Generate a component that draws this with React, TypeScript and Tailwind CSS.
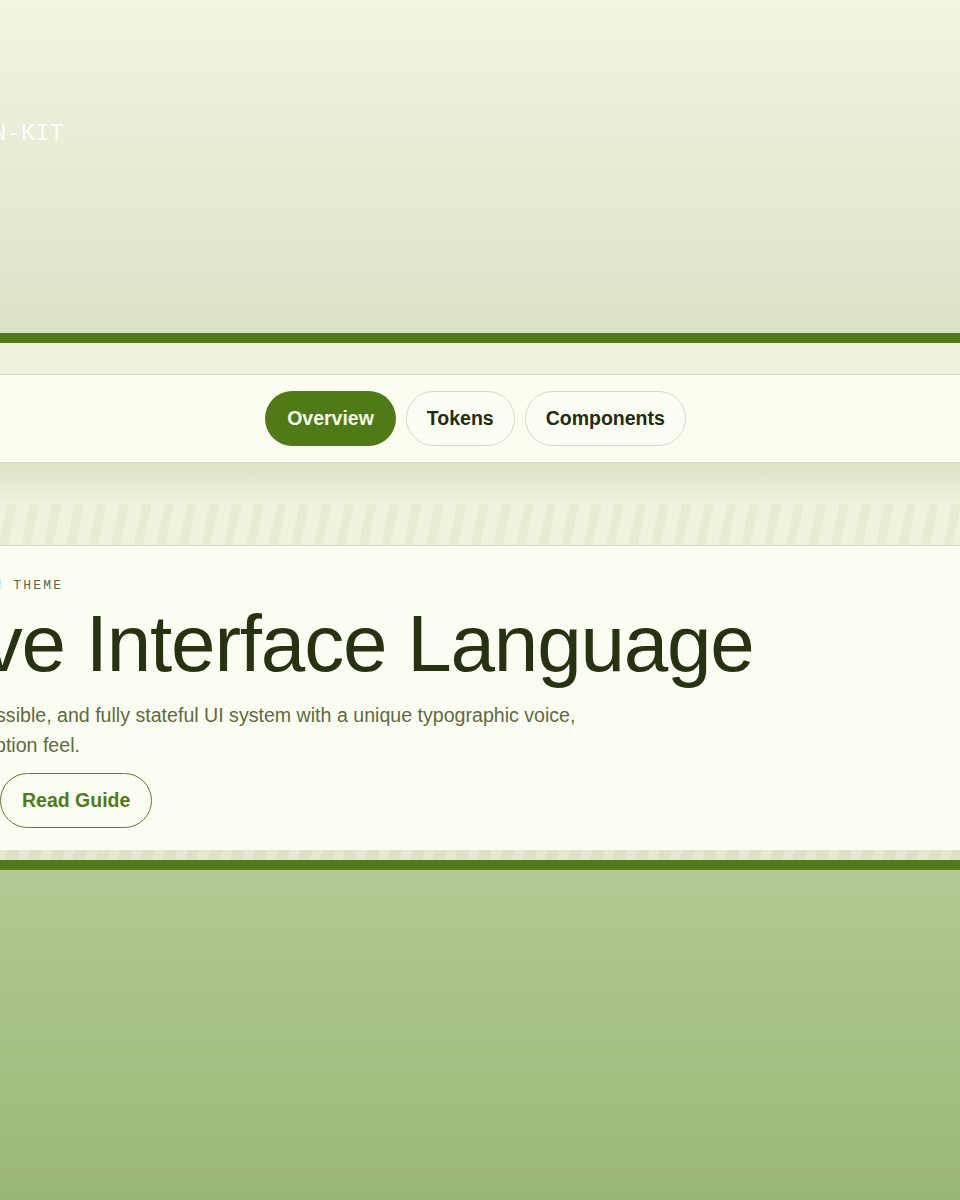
export default function App() {
  const tabs = ['Overview', 'Tokens', 'Components']
  const active = 'Overview'

  return (
    <div className="flex min-h-[1200px] w-full justify-center overflow-hidden font-['Liberation_Sans',Arial,sans-serif]">
      <div className="flex w-[1440px] shrink-0 flex-col">
        {/* masthead */}
        <header className="h-[333px] bg-linear-to-b from-[#f2f5e3] to-[#dbe2c5] px-[160px] pt-[118px]">
          <span className="font-['Liberation_Mono',monospace] text-[24px] leading-[32px] text-white/95">DESIGN-KIT</span>
        </header>
        <div className="h-[10px] bg-[#4f7c17]" />
        <div className="h-[31px] bg-[#eef2dc]" />

        {/* tabs */}
        <nav className="flex h-[89px] items-center justify-center gap-[10px] border-y border-[#d8dbc9] bg-[#fbfdf1] pr-[9px]">
          {tabs.map((t) => (
            <button
              key={t}
              className={
                t === active
                  ? 'flex h-[55px] items-center rounded-full bg-[#4f7b16] px-[22px] text-[19.5px] font-bold text-[#f6f9ea]'
                  : 'flex h-[55px] items-center rounded-full border border-[#d6d9c8] bg-[#fcfdf4] px-[20px] text-[19.5px] font-bold text-[#232c0e]'
              }
            >
              {t}
            </button>
          ))}
        </nav>

        <div className="h-[41px] bg-linear-to-b from-[#dce3c7] to-[#eef2dc]" />
        <div className="h-[41px] bg-[repeating-linear-gradient(102deg,#e7ecd3_0px,#e7ecd3_9px,#eff3de_9px,#eff3de_22px)]" />

        {/* hero card */}
        <section className="border-t border-[#d5d9c4] bg-[#fbfdf2] pb-[22px] pl-[3px] pt-[30px]">
          <p className="font-['Liberation_Mono',monospace] text-[13px] leading-[20px] tracking-[0.17em] text-[#5d6748]">
            EDITION 4 — MEADOW GREEN THEME
          </p>
          <h1 className="mt-[8px] text-[80px] leading-[80px] tracking-[-0.015em] text-[#283210]">
            Adaptive Interface Language
          </h1>
          <p className="mt-4 text-[19.6px] leading-[30px] text-[#5e6b40]">
            A vibrant, expressive, accessible, and fully stateful UI system with a unique typographic voice,
            <br />
            and a calm, measured adoption feel.
          </p>
          <div className="mt-[13px] flex gap-3">
            <button className="flex h-[55px] w-[225px] items-center justify-center rounded-full bg-[#4f7b16] text-[19.5px] font-bold text-[#f6f9ea]">
              Explore Tokens
            </button>
            <button className="flex h-[55px] items-center rounded-full border border-[#5f7a37] px-[21px] text-[19.5px] font-bold text-[#4f7b16]">
              Read Guide
            </button>
          </div>
        </section>

        <div className="h-[10px] bg-[repeating-linear-gradient(102deg,#dce2c8_0px,#dce2c8_12px,#e5e9d3_12px,#e5e9d3_22px)]" />
        <div className="h-[10px] bg-[#4f7c17]" />
        <div className="flex-1 bg-linear-to-b from-[#b3c993] to-[#9bb777]" />
      </div>
    </div>
  )
}
